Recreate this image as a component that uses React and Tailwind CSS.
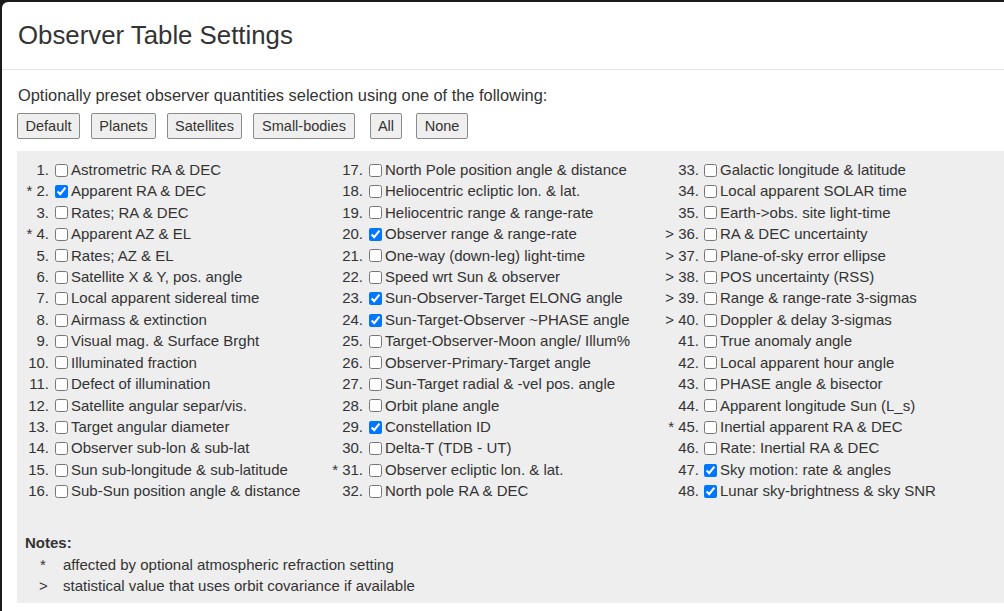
import React from "react";

const col1 = [
  ["1.", "Astrometric RA & DEC", false],
  ["* 2.", "Apparent RA & DEC", true],
  ["3.", "Rates; RA & DEC", false],
  ["* 4.", "Apparent AZ & EL", false],
  ["5.", "Rates; AZ & EL", false],
  ["6.", "Satellite X & Y, pos. angle", false],
  ["7.", "Local apparent sidereal time", false],
  ["8.", "Airmass & extinction", false],
  ["9.", "Visual mag. & Surface Brght", false],
  ["10.", "Illuminated fraction", false],
  ["11.", "Defect of illumination", false],
  ["12.", "Satellite angular separ/vis.", false],
  ["13.", "Target angular diameter", false],
  ["14.", "Observer sub-lon & sub-lat", false],
  ["15.", "Sun sub-longitude & sub-latitude", false],
  ["16.", "Sub-Sun position angle & distance", false],
];
const col2 = [
  ["17.", "North Pole position angle & distance", false],
  ["18.", "Heliocentric ecliptic lon. & lat.", false],
  ["19.", "Heliocentric range & range-rate", false],
  ["20.", "Observer range & range-rate", true],
  ["21.", "One-way (down-leg) light-time", false],
  ["22.", "Speed wrt Sun & observer", false],
  ["23.", "Sun-Observer-Target ELONG angle", true],
  ["24.", "Sun-Target-Observer ~PHASE angle", true],
  ["25.", "Target-Observer-Moon angle/ Illum%", false],
  ["26.", "Observer-Primary-Target angle", false],
  ["27.", "Sun-Target radial & -vel pos. angle", false],
  ["28.", "Orbit plane angle", false],
  ["29.", "Constellation ID", true],
  ["30.", "Delta-T (TDB - UT)", false],
  ["* 31.", "Observer ecliptic lon. & lat.", false],
  ["32.", "North pole RA & DEC", false],
];
const col3 = [
  ["33.", "Galactic longitude & latitude", false],
  ["34.", "Local apparent SOLAR time", false],
  ["35.", "Earth->obs. site light-time", false],
  ["> 36.", "RA & DEC uncertainty", false],
  ["> 37.", "Plane-of-sky error ellipse", false],
  ["> 38.", "POS uncertainty (RSS)", false],
  ["> 39.", "Range & range-rate 3-sigmas", false],
  ["> 40.", "Doppler & delay 3-sigmas", false],
  ["41.", "True anomaly angle", false],
  ["42.", "Local apparent hour angle", false],
  ["43.", "PHASE angle & bisector", false],
  ["44.", "Apparent longitude Sun (L_s)", false],
  ["* 45.", "Inertial apparent RA & DEC", false],
  ["46.", "Rate: Inertial RA & DEC", false],
  ["47.", "Sky motion: rate & angles", true],
  ["48.", "Lunar sky-brightness & sky SNR", true],
];

function Column({ items, numClass, boxClass }) {
  return (
    <div className="flex flex-col">
      {items.map(([n, label, checked]) => (
        <div key={n} className="flex items-center h-[21.43px] whitespace-nowrap">
          <span className={"text-right shrink-0 " + numClass}>{n}</span>
          <input
            type="checkbox"
            defaultChecked={checked}
            className={"m-0 w-[13px] h-[13px] shrink-0 " + boxClass}
          />
          <span className="ml-[3px]">{label}</span>
        </div>
      ))}
    </div>
  );
}

const buttons = [
  ["Default", "w-[63px]", ""],
  ["Planets", "w-[65px]", "ml-[11px]"],
  ["Satellites", "w-[75px]", "ml-[11px]"],
  ["Small-bodies", "w-[102px]", "ml-[11px]"],
  ["All", "w-[32px]", "ml-[15px]"],
  ["None", "w-[52px]", "ml-[14px]"],
];

export default function App() {
  return (
    <div
      className="w-[1004px] h-[611px] overflow-hidden bg-[#1b1b1b] pt-[2px] pl-[2px] text-[#333333]"
      style={{ fontFamily: '"Liberation Sans", Arial, sans-serif' }}
    >
      <div className="w-[1010px] h-[620px] bg-white rounded-tl-[6px]">
        <div className="h-[68px] flex items-center px-[16px] border-b border-[#e5e5e5]">
          <h1 className="text-[25.8px] leading-[1.1] font-normal">Observer Table Settings</h1>
        </div>
        <div className="pt-[14px] pl-[16px]">
          <p className="text-[16.4px] leading-[23.4px]">
            Optionally preset observer quantities selection using one of the following:
          </p>
          <div className="flex mt-[6px] -ml-px">
            {buttons.map(([t, w, m]) => (
              <button
                key={t}
                className={
                  "h-[26px] bg-[#efefef] border border-[#8a8a8a] rounded-[2px] text-[14.5px] text-[#333] flex items-center justify-center " +
                  w +
                  " " +
                  m
                }
              >
                {t}
              </button>
            ))}
          </div>
          <div className="mt-[12px] -ml-px bg-[#eeeeee] h-[452px] pt-[8px] pl-[8px] text-[15px]">
            <div className="grid grid-cols-[300px_330px_1fr]">
              <Column items={col1} numClass="w-[24px]" boxClass="ml-[6px]" />
              <Column items={col2} numClass="w-[38px]" boxClass="ml-[6px]" />
              <Column items={col3} numClass="w-[44px]" boxClass="ml-[5px]" />
            </div>
            <div className="mt-[30px] leading-[21.43px]">
              <div className="font-bold">Notes:</div>
              <div className="flex">
                <span className="w-[38px] pl-[15px]">*</span>
                <span>affected by optional atmospheric refraction setting</span>
              </div>
              <div className="flex">
                <span className="w-[38px] pl-[14px]">&gt;</span>
                <span>statistical value that uses orbit covariance if available</span>
              </div>
            </div>
          </div>
        </div>
      </div>
    </div>
  );
}
